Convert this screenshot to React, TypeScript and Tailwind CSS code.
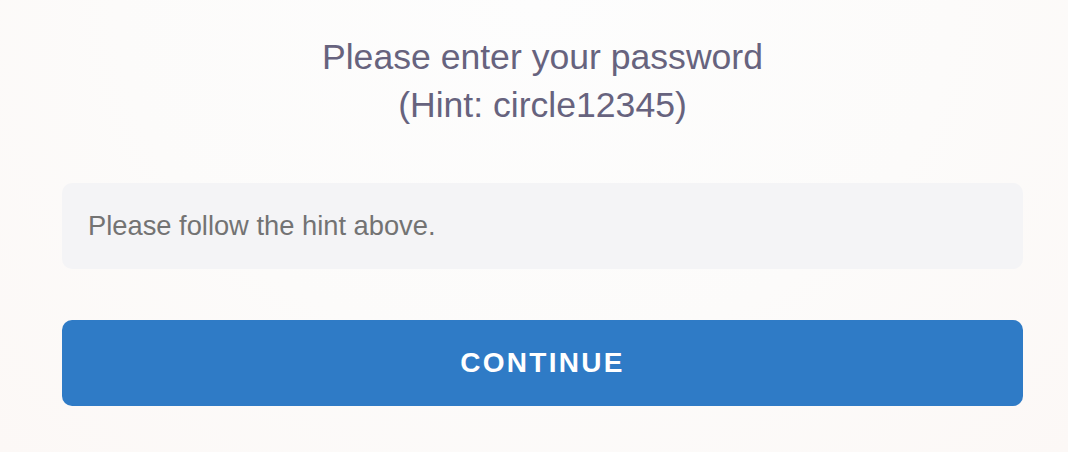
export default function App() {
  return (
    <div className="min-h-[452px] w-full bg-[radial-gradient(ellipse_at_top,#fdfdfd_0%,#fcfbfa_55%,#fcf8f6_100%)] font-['Liberation_Sans',Arial,sans-serif]">
      <div className="ml-[62px] w-[961px] pt-[33px]">
        <h1 className="text-center text-[35.6px] leading-[48px] text-[#67637e]">
          Please enter your password
          <br />
          (Hint: circle12345)
        </h1>

        <input
          type="password"
          placeholder="Please follow the hint above."
          className="mt-[54px] block h-[86px] w-full rounded-[10px] bg-[#f4f4f6] px-[26px] text-[27.3px] text-[#737373] placeholder:text-[#737373] outline-none"
        />

        <button className="mt-[51px] flex h-[86px] w-full items-center justify-center rounded-[10px] bg-[#2f7bc6] text-[28px] font-bold tracking-[2.3px] text-white">
          CONTINUE
        </button>
      </div>
    </div>
  );
}
